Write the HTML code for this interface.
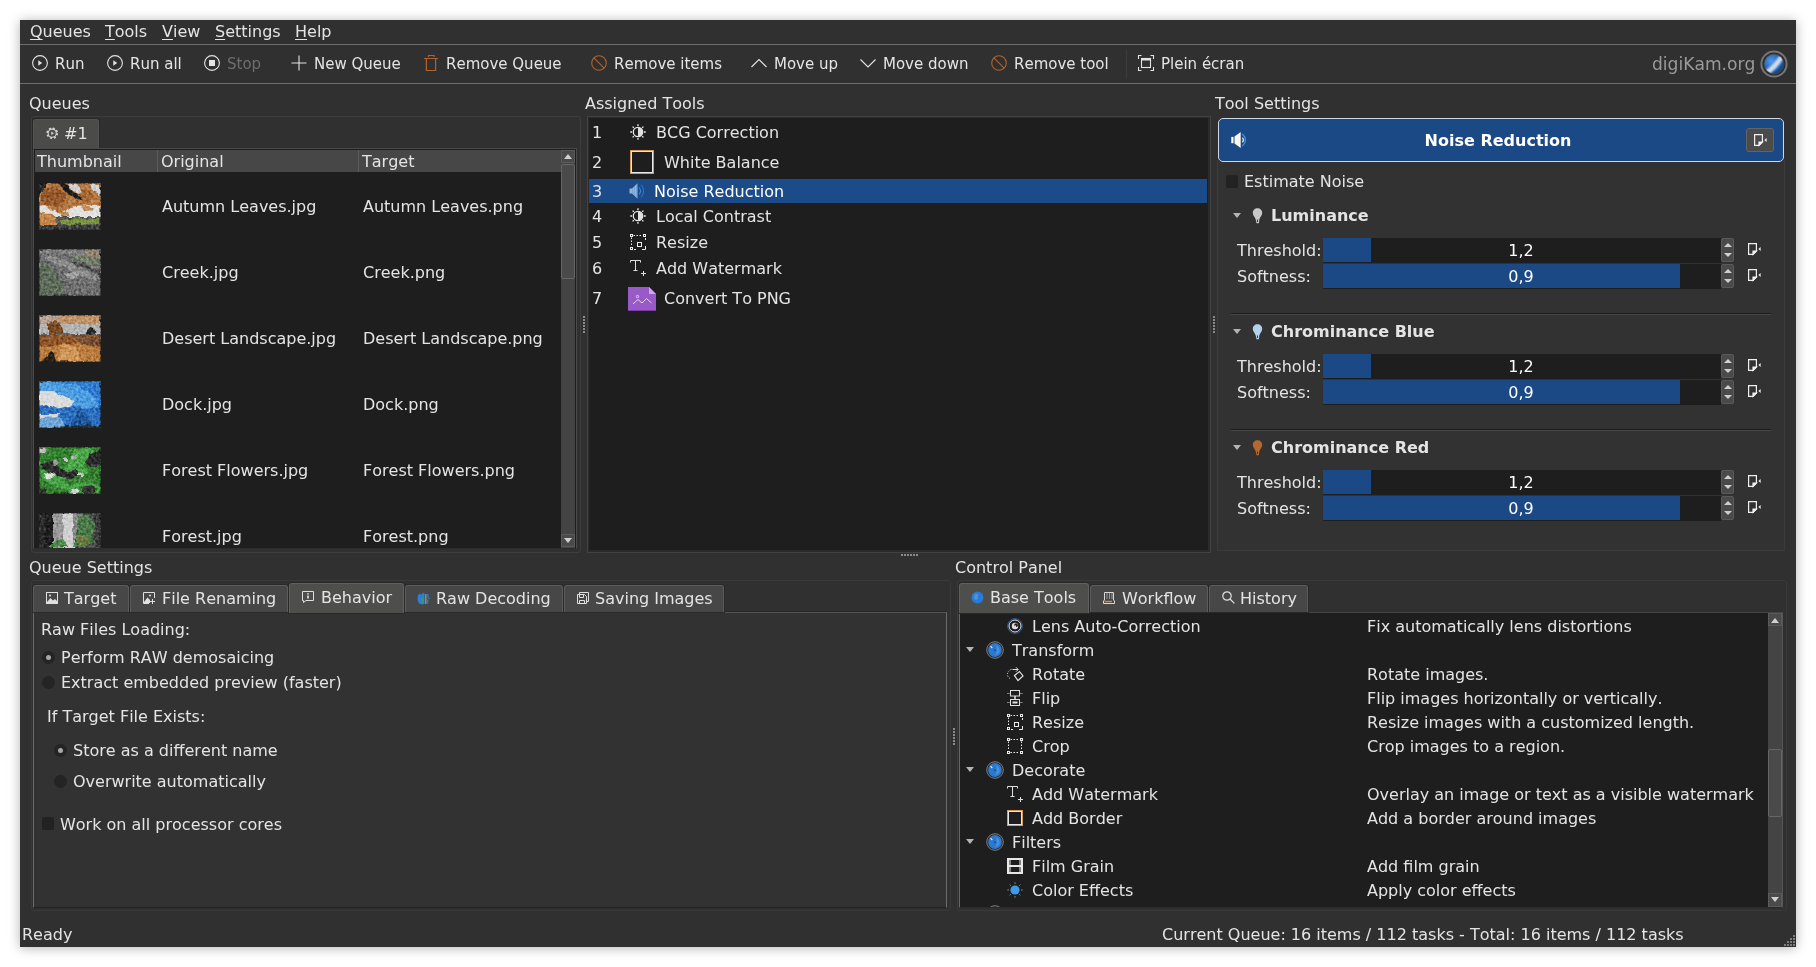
<!DOCTYPE html>
<html><head><meta charset="utf-8"><title>Batch Queue Manager</title>
<style>
*{box-sizing:border-box;margin:0;padding:0}
html,body{width:1816px;height:967px;background:#fff;overflow:hidden}
body{font-family:"DejaVu Sans","Liberation Sans",sans-serif;font-size:16px;color:#e4e4e4;position:relative;font-kerning:none}
#win{position:absolute;left:20px;top:20px;width:1776px;height:927px;background:#303030;box-shadow:0 1px 11px rgba(0,0,0,.3)}
.a{position:absolute;white-space:nowrap}
.t{position:absolute;white-space:nowrap;line-height:20px;height:20px}
u{text-decoration-thickness:1px;text-underline-offset:2px}
.hl{position:absolute;height:1px;background:#6c6c6c}
.dark{position:absolute;background:#1e1e1e}
.tab{position:absolute;background:#474747;border:1px solid #5c5c5c;box-shadow:0 0 0 1px #292929;border-bottom:none;border-radius:3px 3px 0 0}
.tab.sel{background:#4e4e4d;border-color:#606060}
svg{position:absolute;overflow:visible}
</style></head><body>
<div id="win">
<div id="layer" style="position:absolute;left:0;top:0;width:1776px;height:927px;will-change:transform">
<!-- MENUBAR -->
<div id="menubar">
<span class="t" style="left:10px;top:2px"><u>Q</u>ueues</span>
<span class="t" style="left:85px;top:2px"><u>T</u>ools</span>
<span class="t" style="left:142px;top:2px"><u>V</u>iew</span>
<span class="t" style="left:195px;top:2px"><u>S</u>ettings</span>
<span class="t" style="left:275px;top:2px"><u>H</u>elp</span>
</div>
<div class="hl" style="left:0;top:24px;width:1776px"></div>
<!-- TOOLBAR -->
<div id="toolbar">
<svg style="left:12px;top:35px" width="16" height="16" viewBox="0 0 16 16" fill="none" stroke="#e4e4e4" stroke-width="1.1"><circle cx="8" cy="8" r="7.4"/><path d="M6.3 5.2 L10.2 8 L6.3 10.8Z" fill="#e4e4e4" stroke="none"/></svg>
<span class="t" style="left:35px;top:34px;font-size:15px">Run</span>
<svg style="left:87px;top:35px" width="16" height="16" viewBox="0 0 16 16" fill="none" stroke="#e4e4e4" stroke-width="1.1"><circle cx="8" cy="8" r="7.4"/><path d="M6.3 5.2 L10.2 8 L6.3 10.8Z" fill="#e4e4e4" stroke="none"/></svg>
<span class="t" style="left:110px;top:34px;font-size:15px">Run all</span>
<svg style="left:184px;top:35px" width="16" height="16" viewBox="0 0 16 16" fill="none" stroke="#e4e4e4" stroke-width="1.1"><circle cx="8" cy="8" r="7.4"/><rect x="5" y="5" width="6" height="6" fill="#e4e4e4" stroke="none"/></svg>
<span class="t" style="left:207px;top:34px;font-size:15px;color:#6e6e6e">Stop</span>
<svg style="left:271px;top:35px" width="16" height="16" viewBox="0 0 16 16" fill="none" stroke="#e4e4e4" stroke-width="1.1"><path d="M8 0.5V15.5M0.5 8H15.5"/></svg>
<span class="t" style="left:294px;top:34px;font-size:15px">New Queue</span>
<svg style="left:403px;top:35px" width="16" height="17" viewBox="0 0 16 17" fill="none" stroke="#b0632d" stroke-width="1"><path d="M1 3.5H15M5.5 2V0.5H11V2M3.4 3.5V15.5H12.6V3.5" stroke-width="1.2"/></svg>
<span class="t" style="left:426px;top:34px;font-size:15px">Remove Queue</span>
<svg style="left:571px;top:35px" width="16" height="16" viewBox="0 0 16 16" fill="none" stroke="#b0632d" stroke-width="1.1"><circle cx="8" cy="8" r="7.3"/><path d="M2.8 2.8L13.2 13.2"/></svg>
<span class="t" style="left:594px;top:34px;font-size:15px">Remove items</span>
<svg style="left:731px;top:35px" width="16" height="16" viewBox="0 0 16 16" fill="none" stroke="#e4e4e4" stroke-width="1.1"><path d="M0.5 12L8 4.5L15.5 12"/></svg>
<span class="t" style="left:754px;top:34px;font-size:15px">Move up</span>
<svg style="left:840px;top:35px" width="16" height="16" viewBox="0 0 16 16" fill="none" stroke="#e4e4e4" stroke-width="1.1"><path d="M0.5 4.5L8 12L15.5 4.5"/></svg>
<span class="t" style="left:863px;top:34px;font-size:15px">Move down</span>
<svg style="left:971px;top:35px" width="16" height="16" viewBox="0 0 16 16" fill="none" stroke="#b0632d" stroke-width="1.1"><circle cx="8" cy="8" r="7.3"/><path d="M2.8 2.8L13.2 13.2"/></svg>
<span class="t" style="left:994px;top:34px;font-size:15px">Remove tool</span>
<div class="a" style="left:1106px;top:30px;width:1px;height:28px;background:#3c3c3c"></div>
<svg style="left:1118px;top:35px" width="16" height="16" viewBox="0 0 16 16" fill="none" stroke="#e4e4e4" stroke-width="1.1"><path d="M0.5 4V0.5H3.5M12.5 0.5H15.5V4M15.5 12V15.5H12.5M3.5 15.5H0.5V12"/><rect x="3.5" y="3.5" width="9" height="9"/><path d="M3.5 4.5H12.5" stroke-width="2"/></svg>
<span class="t" style="left:1141px;top:34px;font-size:15px">Plein écran</span>
<span class="t" style="left:1632px;top:34px;font-size:17.1px;color:#9a9a9a">digiKam.org</span>
<svg style="left:1740px;top:30px" width="28" height="28" viewBox="0 0 28 28"><defs><radialGradient id="lg" cx="0.35" cy="0.35" r="0.75"><stop offset="0" stop-color="#4f9bea"/><stop offset="0.55" stop-color="#2467bd"/><stop offset="1" stop-color="#123a6c"/></radialGradient><filter id="lb"><feGaussianBlur stdDeviation="0.8"/></filter><clipPath id="lc"><circle cx="14" cy="14" r="9.6"/></clipPath></defs><circle cx="14" cy="14" r="12.6" fill="#2b2b2b" stroke="#767676" stroke-width="2"/><circle cx="14" cy="14" r="10.4" fill="#454545"/><circle cx="14" cy="14" r="9.6" fill="url(#lg)"/><g clip-path="url(#lc)"><path d="M4 21Q12 17 20 5L24 8Q17 19 8 25Z" fill="#eef2f6" opacity=".85" filter="url(#lb)"/></g></svg>
</div>
<div class="hl" style="left:0;top:63px;width:1776px"></div>
<!-- QUEUES -->
<div id="queues">
<span class="t" style="left:9px;top:74px">Queues</span>
<!-- tab widget frame -->
<div class="a" style="left:11px;top:96px;width:550px;height:437px;border:1px solid #3d3d3d;border-radius:3px"></div>
<div class="tab" style="left:13px;top:99px;width:66px;height:30px;background:#4b4b4a;border-color:#535353"></div>
<svg style="left:26px;top:107px" width="12.4" height="12.4" viewBox="0 0 14 14" fill="none" stroke="#d8d8d8"><circle cx="7" cy="7" r="4.6" stroke-width="1.2"/><circle cx="7" cy="7" r="5.6" stroke-width="2" stroke-dasharray="2.2 2.2"/><path d="M6 5L9 7L6 9Z" fill="#d8d8d8" stroke="none"/></svg>
<span class="t" style="left:44px;top:104px">#1</span>
<!-- list view -->
<div class="a" style="left:13px;top:128px;width:544px;height:401px;border:1px solid #4a4a4a;border-bottom-color:#2c2c2c;background:#1e1e1e"></div>
<div class="a" style="left:15px;top:130px;width:527px;height:22px;background:#474747"></div>
<div class="a" style="left:137px;top:130px;width:1px;height:22px;background:#5c5c5c"></div>
<div class="a" style="left:338px;top:130px;width:1px;height:22px;background:#5c5c5c"></div>
<span class="t" style="left:17px;top:132px">Thumbnail</span>
<span class="t" style="left:141px;top:132px">Original</span>
<span class="t" style="left:342px;top:132px">Target</span>
<!-- scrollbar -->
<div class="a" style="left:541px;top:130px;width:14px;height:398px;background:#444"></div>
<div class="a" style="left:541px;top:130px;width:14px;height:13px;background:#4a4a4a;border:1px solid #5a5a5a"></div>
<div class="a" style="left:544px;top:134px;border:4px solid transparent;border-bottom:5px solid #d0d0d0;border-top:none"></div>
<div class="a" style="left:541px;top:144px;width:14px;height:115px;background:#4a4a4a;border:1px solid #666;border-radius:2px"></div>
<div class="a" style="left:541px;top:514px;width:14px;height:13px;background:#4a4a4a;border:1px solid #5a5a5a"></div>
<div class="a" style="left:544px;top:518px;border:4px solid transparent;border-top:5px solid #d0d0d0;border-bottom:none"></div>
<!-- rows -->
<span class="t" style="left:142px;top:177px">Autumn Leaves.jpg</span><span class="t" style="left:343px;top:177px">Autumn Leaves.png</span>
<span class="t" style="left:142px;top:243px">Creek.jpg</span><span class="t" style="left:343px;top:243px">Creek.png</span>
<span class="t" style="left:142px;top:309px">Desert Landscape.jpg</span><span class="t" style="left:343px;top:309px">Desert Landscape.png</span>
<span class="t" style="left:142px;top:375px">Dock.jpg</span><span class="t" style="left:343px;top:375px">Dock.png</span>
<span class="t" style="left:142px;top:441px">Forest Flowers.jpg</span><span class="t" style="left:343px;top:441px">Forest Flowers.png</span>
<span class="t" style="left:142px;top:507px">Forest.jpg</span><span class="t" style="left:343px;top:507px">Forest.png</span>
<!-- thumbs -->
<svg width="0" height="0" style="left:0;top:0"><defs>
<filter id="nz" x="0" y="0" width="100%" height="100%" color-interpolation-filters="sRGB"><feTurbulence type="fractalNoise" baseFrequency="0.14" numOctaves="2" seed="7" result="d"/><feDisplacementMap in="SourceGraphic" in2="d" scale="4.5" xChannelSelector="R" yChannelSelector="G" result="sg"/><feTurbulence type="fractalNoise" baseFrequency="0.4" numOctaves="2" seed="3" result="n"/><feColorMatrix in="n" type="matrix" values="1.0 0 0 0 0  1.0 0 0 0 0  1.0 0 0 0 0  0 0 0 0 1" result="m"/><feBlend in="m" in2="sg" mode="soft-light" result="bl"/><feComposite in="bl" in2="SourceGraphic" operator="in"/></filter>
<filter id="b1"><feGaussianBlur stdDeviation="0.7"/></filter>
<clipPath id="tc"><rect width="62" height="47"/></clipPath>
</defs></svg>
<svg style="left:19px;top:162.5px" width="62" height="47" viewBox="0 0 62 47"><g clip-path="url(#tc)" filter="url(#nz)"><g filter="url(#b1)">
<rect width="62" height="47" fill="#b57840"/>
<path d="M4 6Q16 2 26 10Q30 18 20 24Q8 24 2 18Z" fill="#96592a"/>
<path d="M38 8Q46 4 54 10Q52 18 44 20Q38 16 38 8Z" fill="#a4652f"/>
<path d="M29 2H37L43 9L40 11L34 8Z" fill="#d0d0d0"/>
<path d="M52 2H62V14L57 10Z" fill="#d4d4d4"/>
<path d="M0 23L7 22L12 27L22 31L32 24L44 22L62 23V34H17L12 31L0 28Z" fill="#e2e2e2"/><path d="M40 22L50 23L56 27L46 28Z" fill="#c08a58"/><path d="M20 31L28 29L30 33L22 34Z" fill="#b8824e"/>

<path d="M0 0H9L4 7L0 12Z" fill="#262626"/>
<path d="M19 0L26 0L34 9L43 14L41 16L30 12Z" fill="#1a1a1a"/>
<rect y="34" width="62" height="13" fill="#565656"/>
<path d="M0 29L12 30L17 35L18 42L6 43L0 40Z" fill="#c4854a"/>
<path d="M19 37L40 35L60 36V41L24 42Z" fill="#74903e"/>
<rect y="42" width="62" height="5" fill="#3c3c3c"/>
<rect x="-0.5" y="-0.5" width="63" height="48" fill="none" stroke="#1a1a1a" stroke-width="2.2" opacity=".8"/></g></g></svg>
<svg style="left:19px;top:228.5px" width="62" height="47" viewBox="0 0 62 47"><g clip-path="url(#tc)" filter="url(#nz)"><g filter="url(#b1)">
<rect width="62" height="47" fill="#6c6c6c"/>
<path d="M0 0H62V9L30 6L0 4Z" fill="#7e7e7e"/>
<path d="M8 6L30 12L52 24L62 28V34L44 28L24 18L6 10Z" fill="#8c8c8c"/>
<path d="M28 12L50 20L62 27V24L48 15Z" fill="#444"/>
<path d="M26 24Q36 21 42 27Q36 31 28 29Z" fill="#a0a0a0"/>
<path d="M0 12L12 18L24 34L28 46H0Z" fill="#5e6c5a"/>
<path d="M30 6L60 8V16L44 14Z" fill="#74806a"/>
<path d="M46 2H62V10L50 6Z" fill="#94846c"/>
<path d="M30 32L62 30V47H26Z" fill="#6e6e6e"/>
<rect x="-0.5" y="-0.5" width="63" height="48" fill="none" stroke="#1a1a1a" stroke-width="2.2" opacity=".8"/></g></g></svg>
<svg style="left:19px;top:294.5px" width="62" height="47" viewBox="0 0 62 47"><g clip-path="url(#tc)" filter="url(#nz)"><g filter="url(#b1)">
<rect width="62" height="47" fill="#a9692f"/>
<rect width="62" height="11" fill="#c09468"/>
<rect y="9" width="62" height="11" fill="#b4b4b4"/>
<path d="M0 1H20V8H0Z" fill="#b8a290"/>
<path d="M9 20V8L11 6L13 9L14 6H17L18 8L20 7L22 12L24 20Z" fill="#7a4a22"/>
<path d="M46 20L50 13L53 11L55 13L57 20Z" fill="#262626"/>
<rect y="19" width="62" height="3" fill="#6a6258"/>
<rect y="21" width="62" height="10" fill="#8f5526"/>
<path d="M36 22H62V30H40Z" fill="#7a5030"/>
<path d="M0 31L20 30L40 28L62 34V47H0Z" fill="#b97b3e"/>
<path d="M22 30L34 29L44 46H18Z" fill="#d09656"/>
<path d="M2 47L12 37L15 38L17 47Z" fill="#2a2018"/>
<rect x="-0.5" y="-0.5" width="63" height="48" fill="none" stroke="#1a1a1a" stroke-width="2.2" opacity=".8"/></g></g></svg>
<svg style="left:19px;top:360.5px" width="62" height="47" viewBox="0 0 62 47"><g clip-path="url(#tc)" filter="url(#nz)"><g filter="url(#b1)">
<rect width="62" height="47" fill="#4c9ee0"/>
<path d="M0 0H62V30L54 14L36 4L10 1Z" fill="#2e7ed2"/>
<path d="M0 10L14 10L24 16L36 20L30 26L14 28L0 30Z" fill="#dcdcdc"/>
<path d="M26 24Q32 22 34 27Q30 30 27 28Z" fill="#e4e0dc"/>
<path d="M0 26L8 24L18 28L34 24L46 28L62 26V47H0Z" fill="#2b6fc0"/>
<path d="M0 33H20L18 37H0Z" fill="#d8d8d8"/>
<path d="M0 37L22 36L26 47H0Z" fill="#6fa6d8"/>
<path d="M30 44L42 28L54 44Z" fill="#1f559a"/>
<path d="M26 44H62V47H26Z" fill="#24303c"/>
<rect x="-0.5" y="-0.5" width="63" height="48" fill="none" stroke="#1a1a1a" stroke-width="2.2" opacity=".8"/></g></g></svg>
<svg style="left:19px;top:426.5px" width="62" height="47" viewBox="0 0 62 47"><g clip-path="url(#tc)" filter="url(#nz)"><g filter="url(#b1)">
<rect width="62" height="47" fill="#31802f"/>
<path d="M34 4L48 0L56 4L44 18L50 26L34 30L20 26L30 16Z" fill="#48a646"/>
<path d="M0 24L14 22L30 38L48 34L62 40V44L40 46L10 38Z" fill="#46a244"/>
<path d="M50 6L62 4V18L54 20L46 16Z" fill="#2c2c2c"/>
<path d="M2 16L14 14L22 22L30 24L38 22L40 28L28 32L16 28L4 22Z" fill="#2a2a2a"/>
<path d="M0 0H8L6 6H0Z" fill="#bdbdbd"/>
<path d="M14 14Q18 10 20 15Q18 19 15 18Z" fill="#9a9a9a"/>
<path d="M24 12Q28 10 30 14Q27 16 24 15Z" fill="#c8c8c8"/>
<path d="M32 9Q36 7 38 11Q35 13 32 12Z" fill="#b0b0b0"/>
<path d="M6 27Q12 24 15 28Q12 32 7 31Z" fill="#e2e2e2"/>
<path d="M39 27L45 26L44 29L39 29Z" fill="#d8c8d8"/>
<path d="M31 43Q36 40 41 44Q38 47 32 47Z" fill="#d4d4d4"/>
<path d="M42 40L52 38L58 42L52 47H44Z" fill="#333"/>
<path d="M0 40L8 42L6 47H0Z" fill="#333"/>
<rect x="-0.5" y="-0.5" width="63" height="48" fill="none" stroke="#1a1a1a" stroke-width="2.2" opacity=".8"/></g></g></svg>
<svg style="left:19px;top:492.5px;overflow:hidden" width="62" height="35" viewBox="0 0 62 35"><g clip-path="url(#tc)" filter="url(#nz)"><g filter="url(#b1)">
<rect width="62" height="47" fill="#4a4a4a"/>
<rect x="0" width="14" height="35" fill="#2c2c2c"/>
<rect x="6" width="8" height="35" fill="#1a1a1a"/>
<rect x="14" width="10" height="35" fill="#9a9a9a"/>
<rect x="24" width="12" height="35" fill="#d0d0d0"/>
<path d="M34 0H44L40 20L34 30Z" fill="#8a8a8a"/>
<path d="M38 4L50 2L56 10L54 30L44 34H34L38 22Z" fill="#4a7a46"/>
<path d="M38 22L50 24L50 32H38Z" fill="#6a7a3c"/>
<path d="M16 28L24 26L28 34H8Z" fill="#4a8a46"/>
<rect x="56" width="6" height="35" fill="#3a3a3a"/>
<rect x="-0.5" y="-0.5" width="63" height="48" fill="none" stroke="#1a1a1a" stroke-width="2.2" opacity=".8"/></g></g></svg>
</div>
<!-- ASSIGNED -->
<div id="assigned">
<span class="t" style="left:565px;top:74px">Assigned Tools</span>
<div class="a" style="left:567px;top:96px;width:624px;height:437px;border:1px solid #424242;background:#1e1e1e;box-shadow:inset 0 0 0 1px #2b2b2b,inset -2px -2px 0 0 #2b2b2b"></div>
<div class="a" style="left:569px;top:159px;width:618px;height:24px;background:#1b4b88"></div>
<span class="t" style="left:572px;top:103px">1</span>
<span class="t" style="left:572px;top:133px">2</span>
<span class="t" style="left:572px;top:162px">3</span>
<span class="t" style="left:572px;top:187px">4</span>
<span class="t" style="left:572px;top:213px">5</span>
<span class="t" style="left:572px;top:239px">6</span>
<span class="t" style="left:572px;top:269px">7</span>
<span class="t" style="left:636px;top:103px">BCG Correction</span>
<span class="t" style="left:644px;top:133px">White Balance</span>
<span class="t" style="left:634px;top:162px;color:#fff">Noise Reduction</span>
<span class="t" style="left:636px;top:187px">Local Contrast</span>
<span class="t" style="left:636px;top:213px">Resize</span>
<span class="t" style="left:636px;top:239px">Add Watermark</span>
<span class="t" style="left:644px;top:269px">Convert To PNG</span>
<!-- icons -->
<svg class="ic-bcg" style="left:610px;top:104px" width="16" height="16" viewBox="0 0 16 16" fill="none" stroke="#ececec" stroke-width="1.3"><circle cx="8" cy="8" r="4.7"/><path d="M8 3.3A4.7 4.7 0 0 1 8 12.7Z" fill="#e0e0e0" stroke="none"/><path d="M8 0.3V2M8 14V15.7M0.3 8H2M14 8H15.7M2.6 2.6L3.8 3.8M12.2 12.2L13.4 13.4M2.6 13.4L3.8 12.2M12.2 3.8L13.4 2.6"/></svg>
<div class="a" style="left:610px;top:130px;width:24px;height:24px;border:1px solid #d69a5e;box-shadow:inset 0 0 0 1px #e8e8e8;background:#1e1e1e"></div>
<svg style="left:609px;top:163px" width="17" height="16" viewBox="0 0 17 16" fill="none" stroke-width="1"><path d="M0.5 5.5H3L8.5 0.3V15.7L3 10.5H0.5Z" fill="#9ab4cc"/><path d="M3.5 5.5V10.5M5.5 3.5V12.5M7.5 1.5V14.5" stroke="#4a90e0" stroke-width=".8" stroke-dasharray="1 1"/><path d="M10.5 4.5Q12.6 8 10.5 11.5" stroke="#4a90e0"/><path d="M12.3 1.8Q16.8 8 12.3 14.2" stroke="#3579d0"/></svg>
<svg class="ic-bcg" style="left:610px;top:188px" width="16" height="16" viewBox="0 0 16 16" fill="none" stroke="#ececec" stroke-width="1.3"><circle cx="8" cy="8" r="4.7"/><path d="M8 3.3A4.7 4.7 0 0 1 8 12.7Z" fill="#e0e0e0" stroke="none"/><path d="M8 0.3V2M8 14V15.7M0.3 8H2M14 8H15.7M2.6 2.6L3.8 3.8M12.2 12.2L13.4 13.4M2.6 13.4L3.8 12.2M12.2 3.8L13.4 2.6"/></svg>
<svg style="left:610px;top:214px" width="16" height="16" viewBox="0 0 16 16" fill="none" stroke="#ececec" stroke-width="1"><rect x="0.5" y="0.5" width="2" height="2"/><rect x="13.5" y="0.5" width="2" height="2"/><rect x="0.5" y="13.5" width="2" height="2"/><path d="M3.5 1.5H12.5M1.5 3.5V12.5" stroke-dasharray="1.5 1.5"/><rect x="7.5" y="8.5" width="4" height="4"/><path d="M15.5 4V6M15.5 12V15.5H12M4 15.5H6"/></svg>
<svg style="left:610px;top:240px" width="17" height="16" viewBox="0 0 17 16" fill="none" stroke="#e0e0e0" stroke-width="1"><path d="M0.5 2.5V0.5H10.5V2.5M5.5 0.5V10.5M3.5 10.5H7.5"/><path d="M13.5 11V16M11 13.5H16"/></svg>
<svg style="left:608px;top:267px" width="28" height="24" viewBox="0 0 28 24"><path d="M0 0H21L28 7V24H0Z" fill="#9a59c8"/><path d="M21 0L28 7H21Z" fill="#c9a7e2"/><path d="M5 17L10 12.5L14 16L18.5 11.5L23.5 16" fill="none" stroke="#e6d5f2" stroke-width="1"/><circle cx="9.5" cy="9.5" r="1.2" fill="none" stroke="#e6d5f2" stroke-width="1"/><rect x="0" y="23" width="28" height="1" fill="#7a3fa6"/></svg>
</div>
<!-- TOOLSETTINGS -->
<div id="toolsettings">
<span class="t" style="left:1195px;top:74px">Tool Settings</span>
<div class="a" style="left:1197px;top:140px;width:568px;height:391px;border:1px solid #3b3b3b;border-top:none;background:#323232"></div>
<div class="a" style="left:1198px;top:98px;width:566px;height:44px;background:#1b4985;border:1px solid #cfd8e6;border-radius:5px"></div>
<svg style="left:1210.5px;top:112px" width="17" height="16" viewBox="0 0 17 16" fill="none" stroke-width="1.2"><rect x="0.3" y="4.9" width="2.2" height="6.3" fill="#fff"/><path d="M3.5 4.6L9.7 0V16L3.5 11.5Z" fill="#fbf6f0"/><path d="M11.4 5.6Q13.5 8 11.4 10.4" stroke="#efe2cc"/><path d="M11.4 2Q17.6 8 11.4 14" stroke="#3f98e8"/></svg>
<span class="t" style="left:1198px;top:111px;width:560px;text-align:center;font-weight:bold;color:#fff">Noise Reduction</span>
<div class="a" style="left:1726px;top:108px;width:28px;height:24px;background:#4b4b4b;border:1px solid #636363;border-radius:3px"></div>
<svg style="left:1734px;top:114px" width="13" height="13" viewBox="0 0 13 13" fill="none" stroke="#f0f0f0" stroke-width="1.2"><path d="M0.6 0.6H8.4V8L5 11.4H0.6Z"/><path d="M8.4 8H5V11.4Z" fill="#f0f0f0"/><path d="M12.6 4V8L10.4 6Z" fill="#f0f0f0" stroke="none"/></svg>
<div class="a" style="left:1206px;top:155px;width:12px;height:13px;background:#222;border-radius:2px"></div>
<span class="t" style="left:1224px;top:152px">Estimate Noise</span>
<div class="a" style="left:1213px;top:193px;border:4.5px solid transparent;border-top:5px solid #b4b4b4;border-bottom:none"></div>
<svg style="left:1232px;top:188px" width="11" height="16" viewBox="0 0 11 16"><path d="M5.5 0.3C8.3 0.3 10.2 2.4 10.2 5C10.2 7.6 8 9 7.3 11.5L6.9 15.3H4.5L3.7 11.5C3 9 0.8 7.6 0.8 5C0.8 2.4 2.7 0.3 5.5 0.3Z" fill="#c8c8c8"/><path d="M5 11.5H6V14H5Z" fill="#3a3a3a"/></svg>
<span class="t" style="left:1251px;top:186px;font-weight:bold">Luminance</span>
<span class="t" style="left:1217px;top:221px">Threshold:</span>
<div class="a" style="left:1303px;top:218px;width:398px;height:25px;background:#1e1e1e"></div>
<div class="a" style="left:1303px;top:218px;width:48px;height:24px;background:#1b4985"></div>
<span class="t" style="left:1303px;top:221px;width:396px;text-align:center;color:#fff">1,2</span>
<div class="a" style="left:1701px;top:218px;width:13px;height:24px;background:#4a4a4a;border:1px solid #5a5a5a;border-radius:2px"></div>
<div class="a" style="left:1703.5px;top:223px;border:4px solid transparent;border-bottom:4px solid #d0d0d0;border-top:none"></div>
<div class="a" style="left:1703.5px;top:233px;border:4px solid transparent;border-top:4px solid #d0d0d0;border-bottom:none"></div>
<svg style="left:1728px;top:223px" width="13" height="13" viewBox="0 0 13 13" fill="none" stroke="#f0f0f0" stroke-width="1.2"><path d="M0.6 0.6H8.4V8L5 11.4H0.6Z"/><path d="M8.4 8H5V11.4Z" fill="#f0f0f0"/><path d="M12.6 4V8L10.4 6Z" fill="#f0f0f0" stroke="none"/></svg>
<span class="t" style="left:1217px;top:247px">Softness:</span>
<div class="a" style="left:1303px;top:244px;width:398px;height:25px;background:#1e1e1e"></div>
<div class="a" style="left:1303px;top:244px;width:357px;height:24px;background:#1b4985"></div>
<span class="t" style="left:1303px;top:247px;width:396px;text-align:center;color:#fff">0,9</span>
<div class="a" style="left:1701px;top:244px;width:13px;height:24px;background:#4a4a4a;border:1px solid #5a5a5a;border-radius:2px"></div>
<div class="a" style="left:1703.5px;top:249px;border:4px solid transparent;border-bottom:4px solid #d0d0d0;border-top:none"></div>
<div class="a" style="left:1703.5px;top:259px;border:4px solid transparent;border-top:4px solid #d0d0d0;border-bottom:none"></div>
<svg style="left:1728px;top:249px" width="13" height="13" viewBox="0 0 13 13" fill="none" stroke="#f0f0f0" stroke-width="1.2"><path d="M0.6 0.6H8.4V8L5 11.4H0.6Z"/><path d="M8.4 8H5V11.4Z" fill="#f0f0f0"/><path d="M12.6 4V8L10.4 6Z" fill="#f0f0f0" stroke="none"/></svg>
<div class="a" style="left:1211px;top:293px;width:540px;height:1px;background:#1c1c1c"></div>
<div class="a" style="left:1211px;top:294px;width:540px;height:1px;background:#464646"></div>
<div class="a" style="left:1213px;top:309px;border:4.5px solid transparent;border-top:5px solid #b4b4b4;border-bottom:none"></div>
<svg style="left:1232px;top:304px" width="11" height="16" viewBox="0 0 11 16"><path d="M5.5 0.3C8.3 0.3 10.2 2.4 10.2 5C10.2 7.6 8 9 7.3 11.5L6.9 15.3H4.5L3.7 11.5C3 9 0.8 7.6 0.8 5C0.8 2.4 2.7 0.3 5.5 0.3Z" fill="#b4d0ea"/><path d="M5 11.5H6V14H5Z" fill="#3a3a3a"/></svg>
<span class="t" style="left:1251px;top:302px;font-weight:bold">Chrominance Blue</span>
<span class="t" style="left:1217px;top:337px">Threshold:</span>
<div class="a" style="left:1303px;top:334px;width:398px;height:25px;background:#1e1e1e"></div>
<div class="a" style="left:1303px;top:334px;width:48px;height:24px;background:#1b4985"></div>
<span class="t" style="left:1303px;top:337px;width:396px;text-align:center;color:#fff">1,2</span>
<div class="a" style="left:1701px;top:334px;width:13px;height:24px;background:#4a4a4a;border:1px solid #5a5a5a;border-radius:2px"></div>
<div class="a" style="left:1703.5px;top:339px;border:4px solid transparent;border-bottom:4px solid #d0d0d0;border-top:none"></div>
<div class="a" style="left:1703.5px;top:349px;border:4px solid transparent;border-top:4px solid #d0d0d0;border-bottom:none"></div>
<svg style="left:1728px;top:339px" width="13" height="13" viewBox="0 0 13 13" fill="none" stroke="#f0f0f0" stroke-width="1.2"><path d="M0.6 0.6H8.4V8L5 11.4H0.6Z"/><path d="M8.4 8H5V11.4Z" fill="#f0f0f0"/><path d="M12.6 4V8L10.4 6Z" fill="#f0f0f0" stroke="none"/></svg>
<span class="t" style="left:1217px;top:363px">Softness:</span>
<div class="a" style="left:1303px;top:360px;width:398px;height:25px;background:#1e1e1e"></div>
<div class="a" style="left:1303px;top:360px;width:357px;height:24px;background:#1b4985"></div>
<span class="t" style="left:1303px;top:363px;width:396px;text-align:center;color:#fff">0,9</span>
<div class="a" style="left:1701px;top:360px;width:13px;height:24px;background:#4a4a4a;border:1px solid #5a5a5a;border-radius:2px"></div>
<div class="a" style="left:1703.5px;top:365px;border:4px solid transparent;border-bottom:4px solid #d0d0d0;border-top:none"></div>
<div class="a" style="left:1703.5px;top:375px;border:4px solid transparent;border-top:4px solid #d0d0d0;border-bottom:none"></div>
<svg style="left:1728px;top:365px" width="13" height="13" viewBox="0 0 13 13" fill="none" stroke="#f0f0f0" stroke-width="1.2"><path d="M0.6 0.6H8.4V8L5 11.4H0.6Z"/><path d="M8.4 8H5V11.4Z" fill="#f0f0f0"/><path d="M12.6 4V8L10.4 6Z" fill="#f0f0f0" stroke="none"/></svg>
<div class="a" style="left:1211px;top:409px;width:540px;height:1px;background:#1c1c1c"></div>
<div class="a" style="left:1211px;top:410px;width:540px;height:1px;background:#464646"></div>
<div class="a" style="left:1213px;top:425px;border:4.5px solid transparent;border-top:5px solid #b4b4b4;border-bottom:none"></div>
<svg style="left:1232px;top:420px" width="11" height="16" viewBox="0 0 11 16"><path d="M5.5 0.3C8.3 0.3 10.2 2.4 10.2 5C10.2 7.6 8 9 7.3 11.5L6.9 15.3H4.5L3.7 11.5C3 9 0.8 7.6 0.8 5C0.8 2.4 2.7 0.3 5.5 0.3Z" fill="#b2682e"/><path d="M5 11.5H6V14H5Z" fill="#3a3a3a"/></svg>
<span class="t" style="left:1251px;top:418px;font-weight:bold">Chrominance Red</span>
<span class="t" style="left:1217px;top:453px">Threshold:</span>
<div class="a" style="left:1303px;top:450px;width:398px;height:25px;background:#1e1e1e"></div>
<div class="a" style="left:1303px;top:450px;width:48px;height:24px;background:#1b4985"></div>
<span class="t" style="left:1303px;top:453px;width:396px;text-align:center;color:#fff">1,2</span>
<div class="a" style="left:1701px;top:450px;width:13px;height:24px;background:#4a4a4a;border:1px solid #5a5a5a;border-radius:2px"></div>
<div class="a" style="left:1703.5px;top:455px;border:4px solid transparent;border-bottom:4px solid #d0d0d0;border-top:none"></div>
<div class="a" style="left:1703.5px;top:465px;border:4px solid transparent;border-top:4px solid #d0d0d0;border-bottom:none"></div>
<svg style="left:1728px;top:455px" width="13" height="13" viewBox="0 0 13 13" fill="none" stroke="#f0f0f0" stroke-width="1.2"><path d="M0.6 0.6H8.4V8L5 11.4H0.6Z"/><path d="M8.4 8H5V11.4Z" fill="#f0f0f0"/><path d="M12.6 4V8L10.4 6Z" fill="#f0f0f0" stroke="none"/></svg>
<span class="t" style="left:1217px;top:479px">Softness:</span>
<div class="a" style="left:1303px;top:476px;width:398px;height:25px;background:#1e1e1e"></div>
<div class="a" style="left:1303px;top:476px;width:357px;height:24px;background:#1b4985"></div>
<span class="t" style="left:1303px;top:479px;width:396px;text-align:center;color:#fff">0,9</span>
<div class="a" style="left:1701px;top:476px;width:13px;height:24px;background:#4a4a4a;border:1px solid #5a5a5a;border-radius:2px"></div>
<div class="a" style="left:1703.5px;top:481px;border:4px solid transparent;border-bottom:4px solid #d0d0d0;border-top:none"></div>
<div class="a" style="left:1703.5px;top:491px;border:4px solid transparent;border-top:4px solid #d0d0d0;border-bottom:none"></div>
<svg style="left:1728px;top:481px" width="13" height="13" viewBox="0 0 13 13" fill="none" stroke="#f0f0f0" stroke-width="1.2"><path d="M0.6 0.6H8.4V8L5 11.4H0.6Z"/><path d="M8.4 8H5V11.4Z" fill="#f0f0f0"/><path d="M12.6 4V8L10.4 6Z" fill="#f0f0f0" stroke="none"/></svg>
</div>
<!-- QUEUESETTINGS -->
<div id="queuesettings">
<span class="t" style="left:9px;top:538px">Queue Settings</span>
<div class="a" style="left:11px;top:560px;width:920px;height:331px;border:1px solid #3a3a3a;border-radius:3px"></div>
<div class="a" style="left:13px;top:592px;width:914px;height:296px;border:1px solid #5a5a5a;border-color:#555 #6c6c6c #222 #6c6c6c;background:#323232;box-shadow:0 -1px 0 0 #262626"></div>
<div class="tab" style="left:13px;top:565px;width:96px;height:27px"></div>
<span class="t" style="left:44px;top:569px">Target</span>
<div class="tab" style="left:110px;top:565px;width:158px;height:27px"></div>
<span class="t" style="left:142px;top:569px">File Renaming</span>
<div class="tab sel" style="left:269px;top:563px;width:115px;height:30px"></div>
<span class="t" style="left:301px;top:568px">Behavior</span>
<div class="tab" style="left:385px;top:565px;width:158px;height:27px"></div>
<span class="t" style="left:416px;top:569px">Raw Decoding</span>
<div class="tab" style="left:544px;top:565px;width:160px;height:27px"></div>
<span class="t" style="left:575px;top:569px">Saving Images</span>
<svg style="left:26px;top:572px" width="12" height="12" viewBox="0 0 12 12" fill="none" stroke="#e0e0e0" stroke-width="1"><rect x="0.5" y="0.5" width="11" height="11"/><path d="M1 10L4.5 6L7 8.5L9 7L11 9V11H1Z" fill="#e0e0e0" stroke="none"/><circle cx="4" cy="3.5" r="1" fill="#e0e0e0" stroke="none"/></svg>
<svg style="left:123px;top:572px" width="12" height="12" viewBox="0 0 12 12" fill="none" stroke="#e0e0e0" stroke-width="1"><path d="M11.5 6V0.5H0.5V11.5H6"/><path d="M1 10L4.5 5.5L7 8V11H1Z" fill="#e0e0e0" stroke="none"/><circle cx="7" cy="3.5" r="1" fill="#e0e0e0" stroke="none"/><path d="M9.5 7V12M7 9.5H12"/></svg>
<svg style="left:282px;top:571px" width="12" height="12" viewBox="0 0 12 12" fill="none" stroke="#e0e0e0" stroke-width="1"><path d="M0.5 0.5H11.5V9.5H4L1.5 11.5V9.5H0.5Z"/><path d="M6 2.3V3.6M6 4.6V7.6" stroke-width="1.7"/></svg>
<svg style="left:397px;top:572px" width="13" height="13" viewBox="0 0 13 13"><path d="M1 3L3 1.5L4 3L6 0.5L7.5 2V12L5 12.5L2 11.5L0.5 8Z" fill="#2b7fdc"/><path d="M4 7L6 5.5L7 8L6.5 11.5L4.5 11Z" fill="#3f9a58"/><rect x="8" y="2" width="1.6" height="10" fill="#8a8a8a"/><path d="M11 2V6" stroke="#2b7fdc" stroke-width="1.2"/><path d="M10.5 7.5V11.5" stroke="#3a78c0" stroke-width="1.6"/><circle cx="12" cy="6.5" r=".8" fill="#3f9a58"/></svg>
<svg style="left:557px;top:572px" width="12" height="12" viewBox="0 0 12 12" fill="none" stroke="#e0e0e0" stroke-width="1"><path d="M2.5 2.5V0.5H11.5V9.5H9.5"/><path d="M0.5 2.5H7.5L9.5 4.5V11.5H0.5Z"/><path d="M2.5 2.5V5.5H6.5V2.5M2.5 11.5V8.5H7.5V11.5"/></svg>
<span class="t" style="left:21px;top:600px">Raw Files Loading:</span>
<div class="a" style="left:22px;top:631px;width:13px;height:13px;border-radius:50%;background:#242424"></div>
<div class="a" style="left:26px;top:635px;width:5px;height:5px;border-radius:50%;background:#a8a8a8"></div>
<span class="t" style="left:41px;top:628px">Perform RAW demosaicing</span>
<div class="a" style="left:22px;top:656px;width:13px;height:13px;border-radius:50%;background:#242424"></div>
<span class="t" style="left:41px;top:653px">Extract embedded preview (faster)</span>
<span class="t" style="left:27px;top:687px">If Target File Exists:</span>
<div class="a" style="left:34px;top:724px;width:13px;height:13px;border-radius:50%;background:#242424"></div>
<div class="a" style="left:38px;top:728px;width:5px;height:5px;border-radius:50%;background:#a8a8a8"></div>
<span class="t" style="left:53px;top:721px">Store as a different name</span>
<div class="a" style="left:34px;top:755px;width:13px;height:13px;border-radius:50%;background:#242424"></div>
<span class="t" style="left:53px;top:752px">Overwrite automatically</span>
<div class="a" style="left:22px;top:797px;width:12px;height:13px;background:#222;border-radius:2px"></div>
<span class="t" style="left:40px;top:795px">Work on all processor cores</span>
</div>
<!-- CONTROLPANEL -->
<div id="controlpanel">
<span class="t" style="left:935px;top:538px">Control Panel</span>
<div class="a" style="left:937px;top:560px;width:830px;height:331px;border:1px solid #3a3a3a;border-radius:3px"></div>
<div class="a" style="left:939px;top:592px;width:824px;height:296px;border:1px solid #404040;border-color:#444 #555 #2a2a2a #686868;background:#1e1e1e;overflow:hidden"></div>
<div class="tab" style="left:939px;top:563px;width:130px;height:30px;background:#4e4e4d;border-color:#606060"></div>
<span class="t" style="left:970px;top:568px">Base Tools</span>
<div class="tab" style="left:1070px;top:565px;width:118px;height:27px"></div>
<span class="t" style="left:1102px;top:569px">Workflow</span>
<div class="tab" style="left:1189px;top:565px;width:99px;height:27px"></div>
<span class="t" style="left:1220px;top:569px">History</span>
<svg style="left:951px;top:571px" width="13" height="13" viewBox="0 0 13 13"><circle cx="6.5" cy="6.5" r="6" fill="#2a7ad6"/><path d="M3.5 3.5Q6 2 7.5 4Q6 6 7 8Q5 9.5 3 8Z" fill="#58a0ea" opacity=".7"/></svg>
<svg style="left:1083px;top:572px" width="12" height="12" viewBox="0 0 12 12" fill="none" stroke="#d8d8d8" stroke-width="1"><path d="M1.5 8.5V0.5H10.5V8.5"/><path d="M4 1V7M6.5 1V7M9 1V7" stroke="#9a9a9a"/><path d="M1.5 9.5H9" stroke="#e08a30" stroke-width="1.4"/><path d="M0.5 8.5V11.5H11.5V8.5"/></svg>
<svg style="left:1202px;top:571px" width="13" height="13" viewBox="0 0 13 13" fill="none" stroke="#e0e0e0" stroke-width="1.2"><circle cx="5" cy="5" r="4.2"/><path d="M8 8L12.4 12.4"/></svg>
<div class="a" style="left:1748px;top:593px;width:14px;height:294px;background:#444"></div>
<div class="a" style="left:1748px;top:593px;width:14px;height:13px;background:#4a4a4a;border:1px solid #5a5a5a"></div>
<div class="a" style="left:1751px;top:598px;border:4px solid transparent;border-bottom:5px solid #d0d0d0;border-top:none"></div>
<div class="a" style="left:1748px;top:729px;width:14px;height:68px;background:#4a4a4a;border:1px solid #666;border-radius:2px"></div>
<div class="a" style="left:1748px;top:873px;width:14px;height:14px;background:#4a4a4a;border:1px solid #5a5a5a"></div>
<div class="a" style="left:1751px;top:877px;border:4px solid transparent;border-top:5px solid #d0d0d0;border-bottom:none"></div>
<svg style="left:987px;top:598px" width="16" height="16" viewBox="0 0 16 16" fill="none" stroke="#e0e0e0" stroke-width="1"><circle cx="8" cy="8" r="7.4" stroke="#2f5f9f" stroke-width="1"/><circle cx="8" cy="8" r="6"/><circle cx="8" cy="8" r="3.2" fill="#e0e0e0" stroke="none"/><circle cx="9" cy="7.2" r="1.9" fill="#1e1e1e" stroke="none"/><circle cx="8.2" cy="8.2" r="1" fill="#e0e0e0" stroke="none"/></svg>
<span class="t" style="left:1012px;top:597px">Lens Auto-Correction</span>
<span class="t" style="left:1347px;top:597px">Fix automatically lens distortions</span>
<div class="a" style="left:946px;top:627px;border:4.5px solid transparent;border-top:5px solid #b4b4b4;border-bottom:none"></div>
<svg style="left:966px;top:621px" width="18" height="18" viewBox="0 0 18 18"><circle cx="9" cy="9" r="8.3" fill="#262626" stroke="#7c7c7c" stroke-width="1"/><circle cx="9" cy="9" r="6.9" fill="#2b79cf"/><path d="M10 4Q14 6 13.5 11Q12 14 9 14.5Q12 11 10 4Z" fill="#5aa2ea" opacity=".6"/><path d="M4.6 5.2L6.2 7" stroke="#e8e8e8" stroke-width="1.2"/><circle cx="9" cy="9.2" r="1" fill="#1c4f8a"/></svg>
<span class="t" style="left:992px;top:621px">Transform</span>
<svg style="left:986px;top:646px" width="18" height="16" viewBox="0 0 18 16" fill="none" stroke="#e0e0e0" stroke-width="1"><path d="M8.5 9.5L13.5 5.5L17 10L12 14.5Z" stroke-width="1.2"/><path d="M6.5 3.5H12M10 1.3L12.2 3.5L10 5.7"/><path d="M5.5 3.2Q1.2 5 1.5 9Q2 12 5.5 13.2" stroke-dasharray="1.2 1.5"/></svg>
<span class="t" style="left:1012px;top:645px">Rotate</span>
<span class="t" style="left:1347px;top:645px">Rotate images.</span>
<svg style="left:987px;top:670px" width="16" height="16" viewBox="0 0 16 16" fill="none" stroke="#e0e0e0" stroke-width="1"><rect x="3.5" y="0.5" width="9" height="5.5"/><rect x="3.5" y="9.5" width="9" height="6"/><rect x="5.5" y="11.5" width="5" height="2" fill="#e0e0e0" stroke="none"/><path d="M8 6V9.5" stroke-width="1.6"/><path d="M0.5 3.5H2.5M13.5 3.5H15.5M0.5 12.5H2.5M13.5 12.5H15.5" stroke-dasharray="1 0.6"/></svg>
<span class="t" style="left:1012px;top:669px">Flip</span>
<span class="t" style="left:1347px;top:669px">Flip images horizontally or vertically.</span>
<svg style="left:987px;top:694px" width="16" height="16" viewBox="0 0 16 16" fill="none" stroke="#ececec" stroke-width="1"><rect x="0.5" y="0.5" width="2" height="2"/><rect x="13.5" y="0.5" width="2" height="2"/><rect x="0.5" y="13.5" width="2" height="2"/><path d="M3.5 1.5H12.5M1.5 3.5V12.5" stroke-dasharray="1.5 1.5"/><rect x="7.5" y="8.5" width="4" height="4"/><path d="M15.5 4V6M15.5 12V15.5H12M4 15.5H6"/></svg>
<span class="t" style="left:1012px;top:693px">Resize</span>
<span class="t" style="left:1347px;top:693px">Resize images with a customized length.</span>
<svg style="left:987px;top:718px" width="16" height="16" viewBox="0 0 16 16" fill="none" stroke="#ececec" stroke-width="1"><rect x="0.5" y="0.5" width="2" height="2"/><rect x="13.5" y="0.5" width="2" height="2"/><rect x="0.5" y="13.5" width="2" height="2"/><rect x="13.5" y="13.5" width="2" height="2"/><path d="M3.5 1.5H12.5M1.5 3.5V12.5M3.5 14.5H12.5M14.5 3.5V12.5" stroke-dasharray="1.5 1.5"/></svg>
<span class="t" style="left:1012px;top:717px">Crop</span>
<span class="t" style="left:1347px;top:717px">Crop images to a region.</span>
<div class="a" style="left:946px;top:747px;border:4.5px solid transparent;border-top:5px solid #b4b4b4;border-bottom:none"></div>
<svg style="left:966px;top:741px" width="18" height="18" viewBox="0 0 18 18"><circle cx="9" cy="9" r="8.3" fill="#262626" stroke="#7c7c7c" stroke-width="1"/><circle cx="9" cy="9" r="6.9" fill="#2b79cf"/><path d="M10 4Q14 6 13.5 11Q12 14 9 14.5Q12 11 10 4Z" fill="#5aa2ea" opacity=".6"/><path d="M4.6 5.2L6.2 7" stroke="#e8e8e8" stroke-width="1.2"/><circle cx="9" cy="9.2" r="1" fill="#1c4f8a"/></svg>
<span class="t" style="left:992px;top:741px">Decorate</span>
<svg style="left:987px;top:766px" width="17" height="16" viewBox="0 0 17 16" fill="none" stroke="#e0e0e0" stroke-width="1"><path d="M0.5 2.5V0.5H10.5V2.5M5.5 0.5V10.5M3.5 10.5H7.5"/><path d="M13.5 11V16M11 13.5H16"/></svg>
<span class="t" style="left:1012px;top:765px">Add Watermark</span>
<span class="t" style="left:1347px;top:765px">Overlay an image or text as a visible watermark</span>
<svg style="left:987px;top:790px" width="16" height="16" viewBox="0 0 16 16" fill="none"><rect x="0.5" y="0.5" width="15" height="15" stroke="#d69a5e"/><rect x="1.5" y="1.5" width="13" height="13" stroke="#e8e8e8"/></svg>
<span class="t" style="left:1012px;top:789px">Add Border</span>
<span class="t" style="left:1347px;top:789px">Add a border around images</span>
<div class="a" style="left:946px;top:819px;border:4.5px solid transparent;border-top:5px solid #b4b4b4;border-bottom:none"></div>
<svg style="left:966px;top:813px" width="18" height="18" viewBox="0 0 18 18"><circle cx="9" cy="9" r="8.3" fill="#262626" stroke="#7c7c7c" stroke-width="1"/><circle cx="9" cy="9" r="6.9" fill="#2b79cf"/><path d="M10 4Q14 6 13.5 11Q12 14 9 14.5Q12 11 10 4Z" fill="#5aa2ea" opacity=".6"/><path d="M4.6 5.2L6.2 7" stroke="#e8e8e8" stroke-width="1.2"/><circle cx="9" cy="9.2" r="1" fill="#1c4f8a"/></svg>
<span class="t" style="left:992px;top:813px">Filters</span>
<svg style="left:987px;top:838px" width="16" height="16" viewBox="0 0 16 16" fill="none" stroke="#e8e8e8"><rect x="1" y="1" width="14" height="14" stroke-width="2"/><path d="M1 8H15" stroke-width="2"/><path d="M3 0V16M13 0V16" stroke-width="1"/></svg>
<span class="t" style="left:1012px;top:837px">Film Grain</span>
<span class="t" style="left:1347px;top:837px">Add film grain</span>
<svg style="left:987px;top:862px" width="16" height="16" viewBox="0 0 16 16" fill="none" stroke="#7a8a9a" stroke-width="1"><circle cx="8" cy="8" r="4.6" fill="#3f9be8" stroke="none"/><path d="M8 0.3V2M8 14V15.7M0.3 8H2M14 8H15.7M2.6 2.6L3.8 3.8M12.2 12.2L13.4 13.4M2.6 13.4L3.8 12.2M12.2 3.8L13.4 2.6"/></svg>
<span class="t" style="left:1012px;top:861px">Color Effects</span>
<span class="t" style="left:1347px;top:861px">Apply color effects</span>
<div class="a" style="left:966px;top:885px;width:18px;height:2px;overflow:hidden"><svg style="left:0px;top:0px" width="18" height="18" viewBox="0 0 18 18"><circle cx="9" cy="9" r="8.3" fill="#262626" stroke="#7c7c7c" stroke-width="1"/><circle cx="9" cy="9" r="6.9" fill="#2b79cf"/><path d="M10 4Q14 6 13.5 11Q12 14 9 14.5Q12 11 10 4Z" fill="#5aa2ea" opacity=".6"/><path d="M4.6 5.2L6.2 7" stroke="#e8e8e8" stroke-width="1.2"/><circle cx="9" cy="9.2" r="1" fill="#1c4f8a"/></svg></div>
</div>
<div id="splitters"><div class="a" style="left:563px;top:296px;width:2px;height:2px;background:#8a8a8a"></div><div class="a" style="left:563px;top:299px;width:2px;height:2px;background:#8a8a8a"></div><div class="a" style="left:563px;top:302px;width:2px;height:2px;background:#8a8a8a"></div><div class="a" style="left:563px;top:305px;width:2px;height:2px;background:#8a8a8a"></div><div class="a" style="left:563px;top:308px;width:2px;height:2px;background:#8a8a8a"></div><div class="a" style="left:563px;top:311px;width:2px;height:2px;background:#8a8a8a"></div><div class="a" style="left:1193px;top:296px;width:2px;height:2px;background:#8a8a8a"></div><div class="a" style="left:1193px;top:299px;width:2px;height:2px;background:#8a8a8a"></div><div class="a" style="left:1193px;top:302px;width:2px;height:2px;background:#8a8a8a"></div><div class="a" style="left:1193px;top:305px;width:2px;height:2px;background:#8a8a8a"></div><div class="a" style="left:1193px;top:308px;width:2px;height:2px;background:#8a8a8a"></div><div class="a" style="left:1193px;top:311px;width:2px;height:2px;background:#8a8a8a"></div><div class="a" style="left:881px;top:534px;width:2px;height:2px;background:#8a8a8a"></div><div class="a" style="left:884px;top:534px;width:2px;height:2px;background:#8a8a8a"></div><div class="a" style="left:887px;top:534px;width:2px;height:2px;background:#8a8a8a"></div><div class="a" style="left:890px;top:534px;width:2px;height:2px;background:#8a8a8a"></div><div class="a" style="left:893px;top:534px;width:2px;height:2px;background:#8a8a8a"></div><div class="a" style="left:896px;top:534px;width:2px;height:2px;background:#8a8a8a"></div><div class="a" style="left:933px;top:708px;width:2px;height:2px;background:#8a8a8a"></div><div class="a" style="left:933px;top:711px;width:2px;height:2px;background:#8a8a8a"></div><div class="a" style="left:933px;top:714px;width:2px;height:2px;background:#8a8a8a"></div><div class="a" style="left:933px;top:717px;width:2px;height:2px;background:#8a8a8a"></div><div class="a" style="left:933px;top:720px;width:2px;height:2px;background:#8a8a8a"></div><div class="a" style="left:933px;top:723px;width:2px;height:2px;background:#8a8a8a"></div><div class="a" style="left:1773px;top:915px;width:2px;height:2px;background:#7c7c7c"></div><div class="a" style="left:1770px;top:918px;width:2px;height:2px;background:#7c7c7c"></div><div class="a" style="left:1773px;top:918px;width:2px;height:2px;background:#7c7c7c"></div><div class="a" style="left:1767px;top:921px;width:2px;height:2px;background:#7c7c7c"></div><div class="a" style="left:1770px;top:921px;width:2px;height:2px;background:#7c7c7c"></div><div class="a" style="left:1773px;top:921px;width:2px;height:2px;background:#7c7c7c"></div><div class="a" style="left:1764px;top:924px;width:2px;height:2px;background:#7c7c7c"></div><div class="a" style="left:1767px;top:924px;width:2px;height:2px;background:#7c7c7c"></div><div class="a" style="left:1770px;top:924px;width:2px;height:2px;background:#7c7c7c"></div><div class="a" style="left:1773px;top:924px;width:2px;height:2px;background:#7c7c7c"></div></div>
<!-- STATUS -->
<div id="status">
<span class="t" style="left:2px;top:905px">Ready</span>
<span class="t" style="left:1142px;top:905px">Current Queue: 16 items / 112 tasks - Total: 16 items / 112 tasks</span>
</div>
</div>
</div>
</body></html>
